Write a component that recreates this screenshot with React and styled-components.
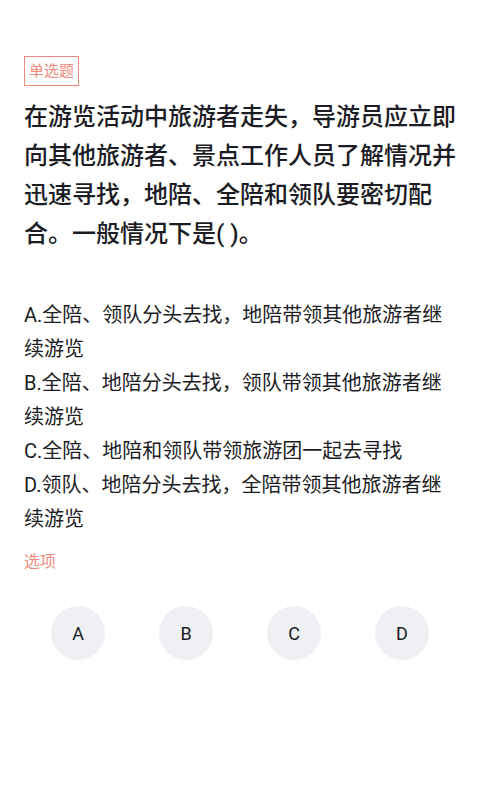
import styled, { createGlobalStyle } from "styled-components"

const GlobalStyle = createGlobalStyle`
    body {
        margin: 0;
        background: #ffffff;
        font-family: Roboto, "Noto Sans CJK SC", "Noto Sans", sans-serif;
        color: #1c1c24;
    }
`
const Page = styled.div`
    padding: 56px 24px 40px;
`
const Tag = styled.span`
    display: inline-block;
    border: 1px solid #f08a7e;
    color: #f08a7e;
    font-size: 15px;
    line-height: 28px;
    padding: 0 4px;
`
const Question = styled.p`
    margin: 12px 0 0;
    font-size: 24px;
    line-height: 39px;
    font-weight: 500;
`
const Options = styled.div`
    margin-top: 44px;
`
const Option = styled.p`
    margin: 0;
    font-size: 20px;
    line-height: 34px;
`
const Label = styled.p`
    margin: 14px 0 0;
    color: #f08a7e;
    font-size: 16px;
    line-height: 24px;
`
const Choices = styled.div`
    display: grid;
    grid-template-columns: repeat(4, 1fr);
    margin-top: 32px;
    justify-items: center;
`
const Choice = styled.button`
    width: 54px;
    height: 54px;
    border-radius: 50%;
    border: none;
    background: #eef0f3;
    color: #1c1c24;
    font-family: Roboto, sans-serif;
    font-size: 18px;
    padding: 0;
`

const options = [
    "A.全陪、领队分头去找，地陪带领其他旅游者继续游览",
    "B.全陪、地陪分头去找，领队带领其他旅游者继续游览",
    "C.全陪、地陪和领队带领旅游团一起去寻找",
    "D.领队、地陪分头去找，全陪带领其他旅游者继续游览",
]

export default function App() {
    return (
        <>
            <GlobalStyle />
            <Page>
                <Tag>单选题</Tag>
                <Question>在游览活动中旅游者走失，导游员应立即向其他旅游者、景点工作人员了解情况并迅速寻找，地陪、全陪和领队要密切配合。一般情况下是( )。</Question>
                <Options>
                    {options.map((o) => <Option key={o}>{o}</Option>)}
                </Options>
                <Label>选项</Label>
                <Choices>
                    {["A", "B", "C", "D"].map((c) => <Choice key={c}>{c}</Choice>)}
                </Choices>
            </Page>
        </>
    )
}
